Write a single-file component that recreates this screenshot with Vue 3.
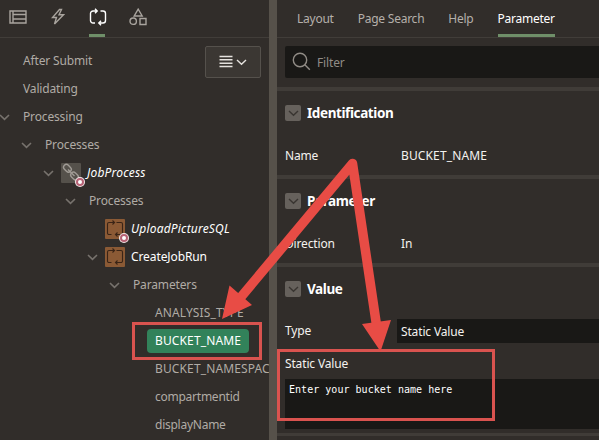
<script setup>
const tree = [
  { label: 'After Submit', x: 23 },
  { label: 'Validating', x: 23 },
  { label: 'Processing', x: 23, open: true },
  { label: 'Processes', x: 45, open: true },
  { label: 'JobProcess', x: 87, open: true, icon: 'chain', tone: 'bright', italic: true, badge: true },
  { label: 'Processes', x: 89, open: true },
  { label: 'UploadPictureSQL', x: 131, icon: 'loop', tone: 'bright', italic: true, badge: true },
  { label: 'CreateJobRun', x: 131, open: true, icon: 'loop', tone: 'bright' },
  { label: 'Parameters', x: 133, open: true },
  { label: 'ANALYSIS_TYPE', x: 155, tone: 'caps' },
  { label: 'BUCKET_NAME', x: 155, tone: 'caps', selected: true },
  { label: 'BUCKET_NAMESPAC', x: 155, tone: 'caps' },
  { label: 'compartmentid', x: 155, tone: 'tight' },
  { label: 'displayName', x: 155, tone: 'tight' },
]
const indent = (n) => (n.icon ? n.x - 26 : n.x) - 23
const tabs = ['Layout', 'Page Search', 'Help', 'Parameter']
</script>

<template>
  <div class="app">
    <section class="left">
      <nav class="icons">
        <span class="ico">
          <svg width="18" height="14" viewBox="0 0 18 14"><path d="M1 1h16v12H1zM4 1v12M4 4.500h13M4 9h13" /></svg>
        </span>
        <span class="ico">
          <svg width="14" height="18" viewBox="0 0 14 18"><path d="M8.500 1.500 1.500 9.500h4L3.500 16 12.500 6.800H8L10.500 1.500z" /></svg>
        </span>
        <span class="ico active">
          <svg width="18" height="18" viewBox="0 0 18 18"><path d="M6 15H4a2.500 2.500 0 0 1-2.500-2.500v-7A2.500 2.500 0 0 1 4 3h4M11.500 3H14a2.500 2.500 0 0 1 2.500 2.500v7A2.500 2.500 0 0 1 14 15h-4M6 .800 8.200 3 6 5.200M12 12.800 9.800 15l2.200 2.200" /></svg>
        </span>
        <span class="ico">
          <svg width="18" height="18" viewBox="0 0 18 18"><path d="M9.200 1.200 5.200 8h8zM11 10.500h6V16.500H11z" /><circle cx="4.200" cy="13.200" r="3.200" /></svg>
        </span>
      </nav>
      <div class="body">
        <ul class="tree">
          <li v-for="(n, i) in tree" :key="i" :style="{ paddingLeft: indent(n) + 'px' }">
            <span class="toggle" :class="{ wide: n.icon }">
              <svg v-if="n.open" width="11" height="7" viewBox="0 0 11 7"><path d="M1 1l4.500 4.300L10 1" /></svg>
            </span>
            <span v-if="n.icon" class="tile" :class="n.icon">
              <svg v-if="n.icon === 'chain'" width="20" height="20" viewBox="0 0 20 20">
                <rect x="2.200" y="2.500" width="8.500" height="5.600" rx="2.800" transform="rotate(45 6.400 5.300)" />
                <rect x="9.300" y="10.200" width="8.500" height="5.600" rx="2.800" transform="rotate(45 13.500 13)" />
                <path d="M7 6.500l6.500 6.500" />
              </svg>
              <svg v-else width="20" height="20" viewBox="0 0 20 20"><path d="M6.500 15.500H4a1.500 1.500 0 0 1-1.500-1.500V5A1.500 1.500 0 0 1 4 3.500h5.500M11.500 3.500H16A1.500 1.500 0 0 1 17.500 5v9a1.500 1.500 0 0 1-1.500 1.500h-5.500M7.500 1.500l2 2-2 2M12.500 13.500l-2 2 2 2" /></svg>
              <i v-if="n.badge" class="badge"></i>
            </span>
            <span class="label" :class="[n.tone, { italic: n.italic, selected: n.selected }]">{{ n.label }}</span>
          </li>
        </ul>
        <button class="menu">
          <svg width="30" height="14" viewBox="0 0 30 14"><path d="M1.500 1.500h13M1.500 4.800h13M1.500 8.200h13M1.500 11.500h13" /><path d="M19 5l4.500 4.300L28 5" /></svg>
        </button>
      </div>
    </section>
    <div class="splitter"></div>
    <section class="right">
      <nav class="tabs">
        <span v-for="t in tabs" :key="t" class="tab" :class="{ active: t === 'Parameter' }">{{ t }}</span>
      </nav>
      <div class="filterbar">
        <div class="filter">
          <svg width="20" height="20" viewBox="0 0 20 20"><circle cx="8" cy="8" r="6.700" /><path d="M12.800 12.800l5 5" /></svg>
          <span>Filter</span>
        </div>
      </div>
      <div class="group">
        <h3><b class="fold"><svg width="11" height="7" viewBox="0 0 11 7"><path d="M1 1l4.500 4.300L10 1" /></svg></b><span>Identification</span></h3>
        <div class="prop"><span class="key">Name</span><span class="caps">BUCKET_NAME</span></div>
      </div>
      <div class="group">
        <h3><b class="fold"><svg width="11" height="7" viewBox="0 0 11 7"><path d="M1 1l4.500 4.300L10 1" /></svg></b><span>Parameter</span></h3>
        <div class="prop"><span class="key">Direction</span><span>In</span></div>
      </div>
      <div class="group value">
        <h3><b class="fold"><svg width="11" height="7" viewBox="0 0 11 7"><path d="M1 1l4.500 4.300L10 1" /></svg></b><span>Value</span></h3>
        <div class="prop type"><span class="key">Type</span><span class="select">Static Value</span></div>
        <div class="static">Static Value</div>
        <div class="area">Enter your bucket name here</div>
      </div>
      <div class="next"></div>
    </section>
    <svg class="marks" width="599" height="440" viewBox="0 0 599 440">
      <path class="box" d="M133.500 323.500h127v35h-127zM278.500 350.500h215v69h-215z" />
      <path class="shaft" d="M241 297L352.500 163.500L376.500 325" />
      <path class="head" d="M222 319l7.500-33.500L252 305zM380.500 351.500l-18.500-27.500 29-4z" />
    </svg>
  </div>
</template>

<style>
body { margin: 0; background: #312d2a; }
</style>

<style scoped>
.app { position: relative; display: flex; width: 599px; height: 440px; overflow: hidden; background: #312d2a; color: #f4f2ef; font: 12px/16px "Noto Sans", sans-serif; }
svg { display: block; fill: none; stroke: currentColor; stroke-width: 1.400; flex: none; }
.left { width: 269px; overflow: hidden; }
.splitter { width: 8px; background: #56514a; }
.right { width: 322px; overflow: hidden; letter-spacing: -.15px; }
.icons, .tabs { display: flex; height: 37px; border-bottom: 1px solid #413d39; }
.icons { padding-left: 9px; gap: 24px; color: #a9a49e; }
.ico { width: 16px; height: 34px; display: flex; justify-content: center; align-items: center; border-bottom: 3px solid transparent; }
.ico svg { margin-left: 1px; }
.ico.active, .tab.active { color: #fff; border-bottom-color: #6f8f69; }
.body { display: flex; padding-top: 9px; }
.tree { list-style: none; margin: 0; padding: 0; flex: none; width: 269px; color: #b0aba5; }
.tree li { display: flex; align-items: center; height: 28px; white-space: nowrap; }
.toggle { width: 23px; height: 28px; flex: none; display: flex; align-items: center; color: #77726d; }
.toggle svg { stroke-width: 1.600; margin-left: -1.500px; }
.toggle.wide svg { margin-left: 4.500px; }
.tile { position: relative; width: 20px; height: 20px; margin-right: 6px; border-radius: 1px; background: #55514b; color: #a09b95; flex: none; }
.tile.loop { background: #8b5a35; color: #3a2416; }
.tile.loop svg { stroke-width: 1.100; }
.badge { position: absolute; left: 15px; top: 15px; width: 4px; height: 4px; border-radius: 50%; background: #fff; border: 2px solid #b66275; box-shadow: 0 0 0 1px #f3e8e8; }
.label { letter-spacing: -.15px; }
.bright { color: #fff; letter-spacing: -.1px; }
.italic { font-style: italic; letter-spacing: .18px; }
.caps { letter-spacing: .13px; }
.tight { letter-spacing: -.25px; }
.label.selected { background: #32825a; color: #fff; border-radius: 4px; padding: 4px 8px; margin-left: -8px; }
.menu { width: 56px; height: 32px; flex: none; margin: -1px 0 0 -64px; padding: 0; position: relative; display: flex; align-items: center; justify-content: center; background: #3b3733; border: 1px solid #55514c; border-radius: 2px; color: #e5e2de; }
.tabs { padding-left: 20px; color: #b5b0aa; letter-spacing: -.24px; }
.tab { height: 34px; line-height: 38px; border-bottom: 3px solid transparent; margin-right: 24px; white-space: nowrap; }
.filterbar { height: 49px; padding: 8px 0 0 8px; box-sizing: border-box; }
.filter { height: 32px; display: flex; align-items: center; gap: 5px; padding-left: 7px; background: #191816; color: #918c86; border-radius: 2px 0 0 2px; }
.filter span { padding-top: 2px; }
.group { height: 84px; border-top: 4px solid #403c38; padding-left: 8px; }
h3 { display: flex; align-items: center; gap: 6px; height: 44px; margin: 0; font-size: 13.500px; font-weight: 700; letter-spacing: -.4px; color: #fff; }
.fold { width: 16px; height: 16px; display: grid; place-items: center; background: #66615c; color: #393531; border-radius: 2px; }
.prop { display: flex; align-items: center; height: 42px; }
.key { width: 116px; }
.value { height: 166px; }
.type { height: 24px; margin-top: 8px; }
.select { flex: 1; height: 24px; line-height: 25px; padding-left: 4px; margin-left: -4px; background: #191816; }
.static { margin-top: 13px; height: 23px; }
.area { height: 42px; padding: 4px; background: #191816; font: 10px/13px "DejaVu Sans Mono", monospace; letter-spacing: .03px; color: #fff; }
.next { height: 3px; background: #403c38; }
.marks { position: absolute; left: 0; top: 0; }
.box { stroke: #d9534f; stroke-width: 3; }
.shaft { stroke: #e84c45; stroke-width: 9.500; stroke-linejoin: round; }
.head { fill: #e84c45; stroke: none; }
</style>
